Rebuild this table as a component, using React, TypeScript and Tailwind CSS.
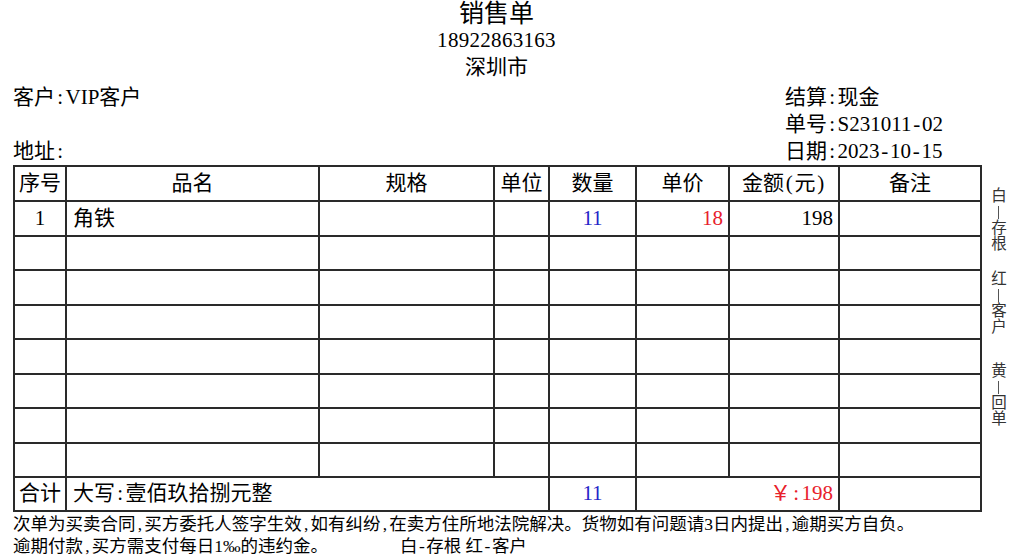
import type { ReactNode } from "react";

const font = "font-['Liberation_Serif','Noto_Sans_CJK_SC',serif]";

const cols = [52, 253, 175, 55, 87, 93, 110, 142];
const headers = ["序号", "品名", "规格", "单位", "数量", "单价", "金额(元)", "备注"];

const cell = "border-2 border-[#2a2a2a] p-0";

const emptyRows = Array.from({ length: 7 });

// half-width punctuation cells, like a Song-style font's ASCII
function M(text: string): ReactNode[] {
  const out: ReactNode[] = [];
  let buf = "";
  Array.from(text).forEach((ch, i) => {
    if (",:-()".includes(ch)) {
      if (buf) out.push(buf);
      buf = "";
      out.push(
        <span key={i} className="inline-block w-[0.5em] text-center">
          {ch}
        </span>
      );
    } else {
      buf += ch;
    }
  });
  if (buf) out.push(buf);
  return out;
}

export default function App() {
  return (
    <div className={`w-[1024px] h-[556px] overflow-hidden bg-white text-black ${font}`}>
      <div className="flex">
        <div className="ml-[13px] w-[967px]">
          <div className="text-center">
            <div className="text-[25px] leading-[27px]">销售单</div>
            <div className="text-[21px] leading-[27px] tracking-[0.3px]">18922863163</div>
            <div className="text-[21px] leading-[27px]">深圳市</div>
          </div>

          <div className="mt-[3px] grid grid-cols-[772px_1fr] text-[21px] leading-[27px]">
            <div className="flex flex-col">
              <div>{M("客户:VIP客户")}</div>
              <div>&nbsp;</div>
              <div>{M("地址:")}</div>
            </div>
            <div className="flex flex-col whitespace-nowrap">
              <div>{M("结算:现金")}</div>
              <div>{M("单号:S231011-02")}</div>
              <div>{M("日期:2023-10-15")}</div>
            </div>
          </div>

          <table className="w-[967px] table-fixed border-collapse text-[21px]">
            <colgroup>
              {cols.map((w, i) => (
                <col key={i} style={{ width: w }} />
              ))}
            </colgroup>
            <thead>
              <tr className="h-[35px]">
                {headers.map((h) => (
                  <th key={h} className={`${cell} text-center font-normal`}>
                    {M(h)}
                  </th>
                ))}
              </tr>
            </thead>
            <tbody>
              <tr className="h-[34.5px]">
                <td className={`${cell} text-center`}>1</td>
                <td className={`${cell} pl-[6px]`}>角铁</td>
                <td className={cell}></td>
                <td className={cell}></td>
                <td className={`${cell} text-center text-[#2424c8]`}>11</td>
                <td className={`${cell} pr-[5px] text-right text-[#e8212b]`}>18</td>
                <td className={`${cell} pr-[5px] text-right`}>198</td>
                <td className={cell}></td>
              </tr>
              {emptyRows.map((_, r) => (
                <tr key={r} className="h-[34.5px]">
                  {cols.map((_, c) => (
                    <td key={c} className={cell}></td>
                  ))}
                </tr>
              ))}
              <tr className="h-[34px]">
                <td className={`${cell} text-center`}>合计</td>
                <td colSpan={3} className={`${cell} pl-[6px]`}>
                  {M("大写:壹佰玖拾捌元整")}
                </td>
                <td className={`${cell} text-center text-[#2424c8]`}>11</td>
                <td colSpan={2} className={`${cell} pr-[5px] text-right text-[#e8212b]`}>
                  {M("￥:198")}
                </td>
                <td className={cell}></td>
              </tr>
            </tbody>
          </table>

          <div className="text-[17.5px] whitespace-nowrap">
            <div className="leading-[24px]">
              {M("次单为买卖合同,买方委托人签字生效,如有纠纷,在卖方住所地法院解决。货物如有问题请3日内提出,逾期买方自负。")}
            </div>
            <div className="grid grid-cols-[387px_1fr] leading-[20px]">
              <span>{M("逾期付款,买方需支付每日1‰的违约金。")}</span>
              <span>{M("白-存根 红-客户")}</span>
            </div>
          </div>
        </div>

        <div className="ml-[11px] flex w-[16px] flex-col items-center pt-[188px] text-[15.5px] leading-[16px] text-[#333]">
          <VGroup a="白" b="存" c="根" />
          <div className="h-[19px]" />
          <VGroup a="红" b="客" c="户" />
          <div className="h-[28px]" />
          <VGroup a="黄" b="回" c="单" />
        </div>
      </div>
    </div>
  );
}

function VGroup({ a, b, c }: { a: string; b: string; c: string }) {
  return (
    <div className="flex flex-col items-center">
      <span className="h-[16px]">{a}</span>
      <span className="flex h-[16px] items-center">
        <span className="h-[13px] w-px bg-[#555]" />
      </span>
      <span className="h-[16px]">{b}</span>
      <span className="h-[16px]">{c}</span>
    </div>
  );
}
